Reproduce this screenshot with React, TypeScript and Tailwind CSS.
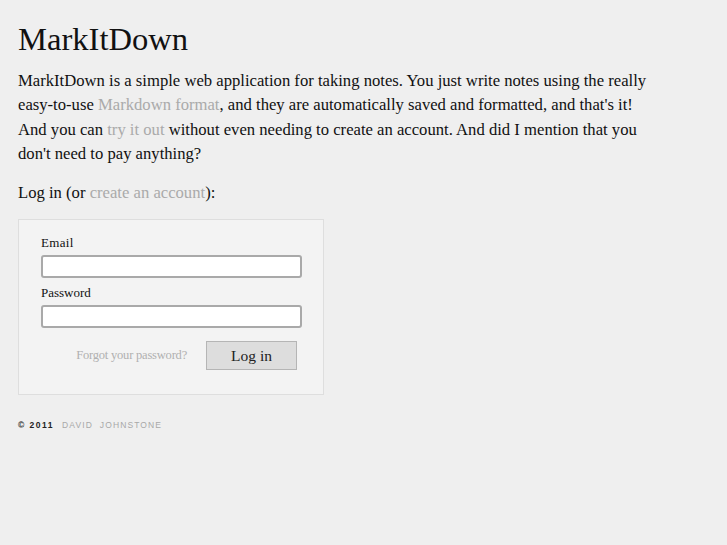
import React from "react";

export default function App() {
  const serif = { fontFamily: '"Liberation Serif", "Times New Roman", serif' };
  return (
    <div className="min-h-[545px] w-full bg-[#efefef] text-[#111]" style={serif}>
      <div className="w-[652px] pl-[18px] pt-[20px]">
        <h1 className="text-[32.6px] leading-[38px] font-normal">MarkItDown</h1>
        <p className="mt-[11px] text-[16.65px] leading-[24.4px]">
          MarkItDown is a simple web application for taking notes. You just write notes using the really easy-to-use{" "}
          <a className="text-[#aaaaaa]">Markdown format</a>, and they are automatically saved and formatted, and that's it! And you can{" "}
          <a className="text-[#aaaaaa]">try it out</a> without even needing to create an account. And did I mention that you don't need to pay anything?
        </p>
        <p className="mt-[14px] text-[16.65px] leading-[24px]">
          Log in (or <a className="text-[#aaaaaa]">create an account</a>):
        </p>
        <div className="mt-[14px] w-[306px] h-[176px] border border-[#dedede] bg-[#f3f3f3] pl-[22px] pr-[22px] pt-[15px]">
          <label className="block text-[13px] leading-[16px] tracking-[0.3px]">Email</label>
          <input className="mt-[4px] block w-[261px] h-[23px] bg-white border-2 border-[#a9a9a9] rounded-[3px] outline-none" />
          <label className="mt-[7px] block text-[13px] leading-[16px]">Password</label>
          <input type="password" className="mt-[4px] block w-[261px] h-[23px] bg-white border-2 border-[#a9a9a9] rounded-[3px] outline-none" />
          <div className="mt-[13px] flex items-center justify-end w-[256px] gap-[19px]">
            <a className="text-[12.5px] text-[#b0b0b0] tracking-[-0.2px]">Forgot your password?</a>
            <button className="w-[91px] h-[29px] bg-[#dddddd] border border-[#b5b5b5] text-[15.5px] text-[#222]" style={serif}>
              Log in
            </button>
          </div>
        </div>
        <div
          className="mt-[24px] text-[8.5px] font-bold tracking-[1.5px] uppercase"
          style={{ fontFamily: '"Liberation Sans", Arial, sans-serif' }}
        >
          <span className="text-[#222]">©&nbsp;2011</span>
          <span className="ml-[8px] font-normal text-[#a8a8a8] tracking-[1.1px]">David&nbsp;&nbsp;Johnstone</span>
        </div>
      </div>
    </div>
  );
}
